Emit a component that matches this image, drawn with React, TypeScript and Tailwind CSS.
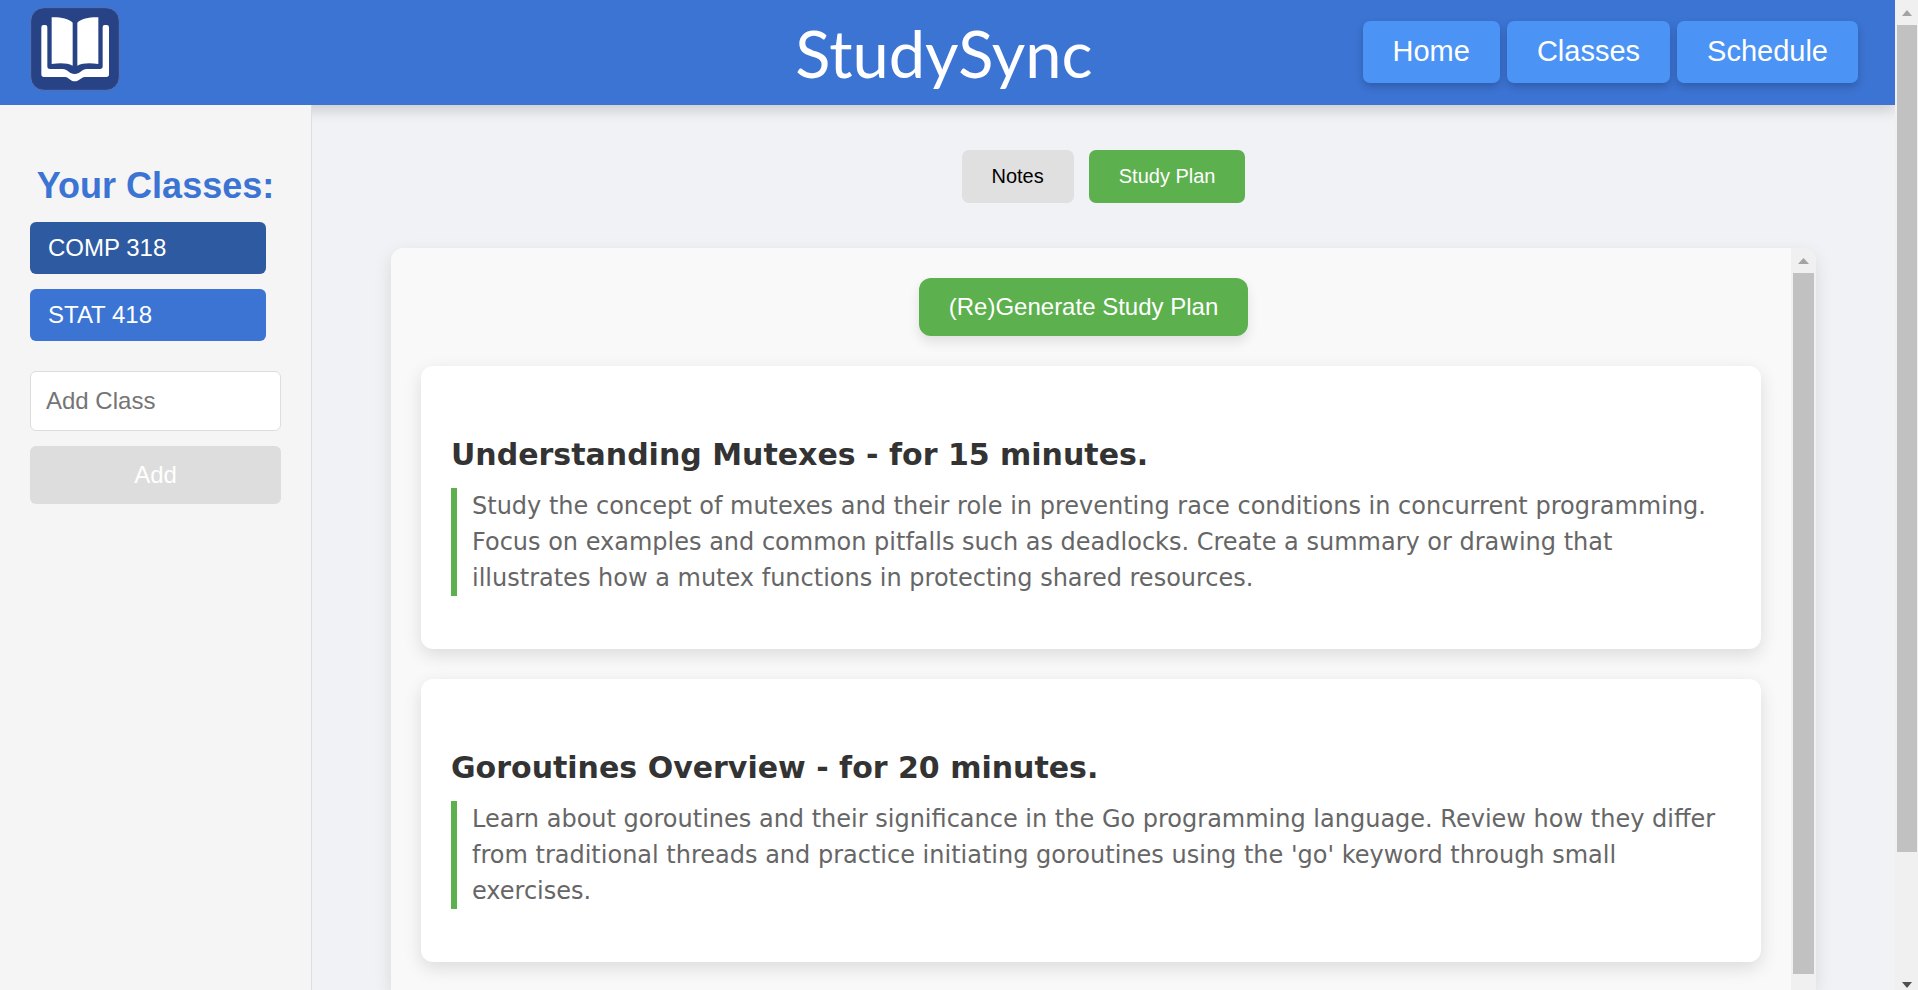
import { useState } from 'react';

const navLinks = ['Home', 'Classes', 'Schedule'];
const classes = ['COMP 318', 'STAT 418'];
const tabs = ['Notes', 'Study Plan'];

const studyPlan = [
  {
    topic: 'Understanding Mutexes',
    minutes: 15,
    text: 'Study the concept of mutexes and their role in preventing race conditions in concurrent programming. Focus on examples and common pitfalls such as deadlocks. Create a summary or drawing that illustrates how a mutex functions in protecting shared resources.',
  },
  {
    topic: 'Goroutines Overview',
    minutes: 20,
    text: "Learn about goroutines and their significance in the Go programming language. Review how they differ from traditional threads and practice initiating goroutines using the 'go' keyword through small exercises.",
  },
];

function Logo() {
  return (
    <svg viewBox="0 0 270 252" className="h-[84px] w-[90px]" aria-hidden="true">
      <rect x="2" y="2" width="266" height="248" rx="40" fill="#284385" stroke="#5473b8" strokeWidth="3" />
      <g fill="#fff">
        <path d="M65 31C90 30 116 35 128 47V176C112 168 92 167 65 171Z" />
        <path d="M205 31C180 30 154 35 142 47V176C158 168 178 167 205 171Z" />
        <path d="M41 54H46Q52 54 52 60V178Q52 186 60 186H98C112 186 118 201 134 201C150 201 156 186 170 186H210Q218 186 218 178V60Q218 54 224 54H230Q237 54 237 61V202Q237 210 229 210H164C154 211 147 223 134 223C121 223 116 211 106 210H42Q34 210 34 202V61Q34 54 41 54Z" />
      </g>
    </svg>
  );
}

function Header() {
  return (
    <header className="grid h-[105px] shrink-0 grid-cols-[1fr_auto_1fr] items-center bg-[#3c74d4] pr-[37px] pl-[30px] shadow-[0_6px_12px_rgba(0,0,0,0.15)]">
      <div className="pb-2">
        <Logo />
      </div>
      <h1 className="font-['Century_Gothic',Lato,sans-serif] text-[65px] leading-[80px] text-white">StudySync</h1>
      <nav className="flex justify-end gap-[7px] pb-[2px]">
        {navLinks.map((link) => (
          <button
            key={link}
            className="h-[62px] rounded-[7px] bg-[#4b93f4] px-[30px] text-[29px] text-white shadow-[0_4px_8px_rgba(0,0,0,0.2)]"
          >
            {link}
          </button>
        ))}
      </nav>
    </header>
  );
}

function Sidebar() {
  const [selected, setSelected] = useState('COMP 318');
  const [newClass, setNewClass] = useState('');

  return (
    <aside className="relative w-[312px] shrink-0 border-r border-[#dddddd] bg-[#f5f5f5] px-[30px] pt-[60px]">
      <h2 className="text-center text-[36px] leading-[42px] font-bold whitespace-nowrap text-[#3c74d4]">Your Classes:</h2>
      <ul className="mt-[15px] mr-[15px] flex flex-col gap-[15px]">
        {classes.map((name) => (
          <li key={name}>
            <button
              onClick={() => setSelected(name)}
              className={`h-[52px] w-full rounded-[6px] px-[18px] text-left text-[24px] text-white ${
                name === selected ? 'bg-[#2d5aa1]' : 'bg-[#3c74d4]'
              }`}
            >
              {name}
            </button>
          </li>
        ))}
      </ul>
      <form className="mt-[30px] flex flex-col gap-[15px]" onSubmit={(e) => e.preventDefault()}>
        <input
          type="text"
          aria-label="Add Class"
          placeholder="Add Class"
          value={newClass}
          onChange={(e) => setNewClass(e.target.value)}
          className="h-[60px] w-full rounded-[6px] border border-[#dddddd] bg-white px-[15px] text-[24px] placeholder:text-[#757575]"
        />
        <button disabled={!newClass} className="h-[58px] rounded-[6px] bg-[#dddddd] text-[24px] text-white">
          Add
        </button>
      </form>
    </aside>
  );
}

function PanelScrollbar() {
  return (
    <div className="flex w-[25px] shrink-0 flex-col items-center bg-[#f0f0f0]">
      <svg viewBox="0 0 25 25" className="size-[25px]" aria-hidden="true">
        <path d="M7 16L12.500 10L18 16Z" fill="#a3a3a3" />
      </svg>
      <div className="mb-4 w-[21px] flex-1 bg-[#c1c1c1]" />
    </div>
  );
}

function PageScrollbar() {
  return (
    <div className="flex w-[23px] shrink-0 flex-col bg-[#f0f0f0]">
      <svg viewBox="0 0 23 25" className="h-[25px] w-[23px]" aria-hidden="true">
        <path d="M7 16L12 10L17 16Z" fill="#a3a3a3" />
      </svg>
      <div className="min-h-0 flex-1 pr-px pl-[2px]">
        <div className="h-[88%] bg-[#c1c1c1]" />
      </div>
      <svg viewBox="0 0 23 25" className="h-[25px] w-[23px]" aria-hidden="true">
        <path d="M7 17L12 23L17 17Z" fill="#505050" />
      </svg>
    </div>
  );
}

export default function App() {
  const [tab, setTab] = useState('Study Plan');

  return (
    <div className="flex h-screen overflow-hidden bg-[#f0f2f5] font-['Liberation_Sans',Arial,sans-serif]">
      <div className="flex min-w-0 flex-1 flex-col">
        <Header />
        <div className="flex min-h-0 flex-1">
          <Sidebar />
          <main className="flex min-w-0 flex-1 flex-col px-[79px] pt-[45px]">
            <div className="flex justify-center gap-[15px]">
              {tabs.map((name) => (
                <button
                  key={name}
                  onClick={() => setTab(name)}
                  className={`h-[53px] rounded-[7px] px-[30px] pb-[2px] text-[20px] ${
                    name === tab ? 'bg-[#5cb04e] text-white' : 'bg-[#e0e0e0] text-black'
                  }`}
                >
                  {name}
                </button>
              ))}
            </div>

            {/* Plan panel */}
            <section className="mt-[45px] flex min-h-0 flex-1 overflow-hidden rounded-t-[12px] bg-[#f9f9f9] shadow-[0_6px_18px_rgba(0,0,0,0.1)]">
              <div className="flex min-w-0 flex-1 flex-col gap-[30px] overflow-hidden p-[30px]">
                <button className="mr-[15px] h-[58px] shrink-0 self-center rounded-[12px] bg-[#5cb04e] px-[30px] text-[24px] text-white shadow-[0_6px_12px_rgba(0,0,0,0.1)]">
                  (Re)Generate Study Plan
                </button>
                {studyPlan.map((item) => (
                  <article
                    key={item.topic}
                    className="shrink-0 rounded-[12px] bg-white px-[30px] pt-[69px] pb-[53px] font-[Verdana,'DejaVu_Sans',sans-serif] shadow-[0_6px_18px_rgba(0,0,0,0.12)]"
                  >
                    <h3 className="text-[30px] leading-[40px] font-bold text-[#333333]">
                      {item.topic} - for {item.minutes} minutes.
                    </h3>
                    <p className="mt-[13px] border-l-[6px] border-[#5cb04e] pl-[15px] text-[24px] leading-[36px] text-[#666666]">
                      {item.text}
                    </p>
                  </article>
                ))}
              </div>
              <PanelScrollbar />
            </section>
          </main>
        </div>
      </div>
      <PageScrollbar />
    </div>
  );
}
